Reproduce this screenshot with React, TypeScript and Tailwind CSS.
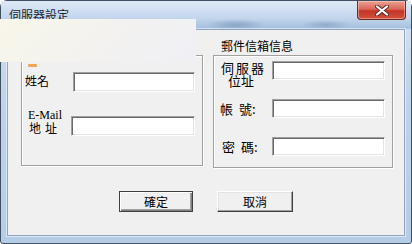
import React from "react";

const cjk = "font-['Noto_Sans_CJK_TC','Noto_Sans_CJK_SC',sans-serif]";

function Field({ w = "w-[113px]", h = "h-[19px]" }: { w?: string; h?: string }) {
  return (
    <div
      className={`${w} ${h} shrink-0 bg-white border border-t-[#a0a0a0] border-l-[#a0a0a0] border-b-white border-r-white shadow-[inset_1px_1px_0_#696969,inset_-1px_-1px_0_#e3e3e3]`}
    />
  );
}

function Button({ label, primary }: { label: string; primary?: boolean }) {
  return (
    <button
      className={`h-[21px] flex items-center justify-center text-[12px] text-black bg-[#f0f0f0] ${cjk} ${
        primary
          ? "w-[74px] border border-[#404040] shadow-[inset_1px_1px_0_#fff,inset_-1px_-1px_0_#808080,inset_-2px_-2px_0_#a0a0a0]"
          : "w-[76px] border border-t-white border-l-white border-b-[#404040] border-r-[#404040] shadow-[inset_-1px_-1px_0_#a0a0a0,inset_1px_1px_0_#e3e3e3]"
      }`}
    >
      {label}
    </button>
  );
}

export default function App() {
  return (
    <div className="relative w-[412px] h-[244px] bg-white overflow-hidden">
      {/* window */}
      <div className="w-full h-full flex flex-col rounded-t-[7px] rounded-b-[3px] border border-[#3f4f63] bg-[linear-gradient(180deg,#d6e4f3_0%,#bfd3ea_40%,#b6cde7_100%)]">
        {/* title bar */}
        <div className="h-[28px] flex justify-between bg-[radial-gradient(ellipse_30px_6px_at_235px_24px,#8aa6c6,transparent),radial-gradient(ellipse_25px_5px_at_325px_24px,#90abca,transparent),linear-gradient(180deg,#dfe9f5_0%,#c3d6ec_60%,#a3bfde_100%)]">
          <div className={`pl-[8px] pt-[7px] text-[12px] leading-[14px] text-[#1c2430] ${cjk}`}>伺服器設定</div>
          <div className="mr-[5px] w-[49px] h-[19px] rounded-b-[4px] border border-t-0 border-[#6b2a22] bg-[linear-gradient(180deg,#eba293_0%,#d9675a_45%,#c43427_55%,#d3513c_100%)] shadow-[inset_0_0_0_1px_rgba(255,220,210,0.45)] flex items-center justify-center">
            <svg width="14" height="11" viewBox="0 0 14 11">
              <path d="M2 1.5 L12 9.5 M12 1.5 L2 9.5" stroke="#5a2a24" strokeWidth="4" strokeLinecap="round" />
              <path d="M2 1.5 L12 9.5 M12 1.5 L2 9.5" stroke="#ffffff" strokeWidth="2.2" strokeLinecap="round" />
            </svg>
          </div>
        </div>

        {/* client area */}
        <div className="flex-1 mx-[6px] mb-[7px] border border-[#8fa5c0] bg-[#f0f0f0] shadow-[0_0_0_1px_rgba(255,255,255,0.5)]">
          <div className="flex pt-[8px] pl-[13px] gap-[10px]">
            {/* left column */}
            <div className="w-[182px] flex flex-col">
              <div className={`h-[17px] text-[12px] leading-[16px] pl-[8px] ${cjk}`}>個人資料</div>
              <div className="h-[111px] border border-[#a0a0a0] shadow-[inset_1px_1px_0_#fff,1px_1px_0_#fff] pt-[16px] pr-[7px]">
                <div className="flex items-center h-[20px]">
                  <span className={`pl-[3px] w-[51px] text-[12px] leading-[14px] text-black mt-[-3px] ${cjk}`}>姓名</span>
                  <Field w="w-[122px]" h="h-[20px]" />
                </div>
                <div className="flex items-end h-[20px] mt-[24px]">
                  <div className="pl-[6px] w-[49px] flex flex-col text-black mb-[1px]">
                    <span className="font-['Liberation_Serif',serif] text-[12px] leading-[12px]">E-Mail</span>
                    <span className={`pl-[1px] text-[12px] leading-[14px] ${cjk}`}>
                      地<span className="ml-[4px]">址</span>
                    </span>
                  </div>
                  <Field w="w-[124px]" h="h-[20px]" />
                </div>
              </div>
            </div>

            {/* right column */}
            <div className="w-[180px] flex flex-col">
              <div className={`h-[17px] text-[12px] leading-[16px] pl-[8px] text-black ${cjk}`}>郵件信箱信息</div>
              <div className="h-[113px] border border-[#a0a0a0] shadow-[inset_1px_1px_0_#fff,1px_1px_0_#fff] pt-[5px] pr-[7px]">
                <div className="flex items-start h-[19px]">
                  <div className={`w-[58px] pl-[7px] flex flex-col text-[13px] leading-[13px] text-black ${cjk}`}>
                    <span>
                      伺<span className="ml-[2px]">服</span>
                      <span className="ml-[2px]">器</span>
                    </span>
                    <span className="pl-[7px]">位址</span>
                  </div>
                  <Field />
                </div>
                <div className="flex items-center h-[19px] mt-[19px]">
                  <span className={`w-[58px] pl-[6px] text-[13px] leading-[14px] text-black ${cjk}`}>
                    帳<span className="ml-[6px]">號:</span>
                  </span>
                  <Field />
                </div>
                <div className="flex items-center h-[19px] mt-[19px]">
                  <span className={`w-[58px] pl-[8px] text-[13px] leading-[14px] text-black ${cjk}`}>
                    密<span className="ml-[6px]">碼:</span>
                  </span>
                  <Field />
                </div>
              </div>
            </div>
          </div>

          {/* buttons */}
          <div className="flex gap-[24px] pl-[111px] mt-[23px]">
            <Button label="確定" primary />
            <Button label="取消" />
          </div>
        </div>
      </div>

      {/* stray overlay left over on top of the dialog */}
      <div className="absolute left-0 top-[19px] w-[196px] h-[43px] bg-[linear-gradient(135deg,#f8f6e9_0%,#f3f2ef_50%,#f0eff5_100%)]" />
      <div className="absolute left-[28px] top-[64px] w-[9px] h-[3px] rounded-[1px] bg-[#efa657]" />
    </div>
  );
}
